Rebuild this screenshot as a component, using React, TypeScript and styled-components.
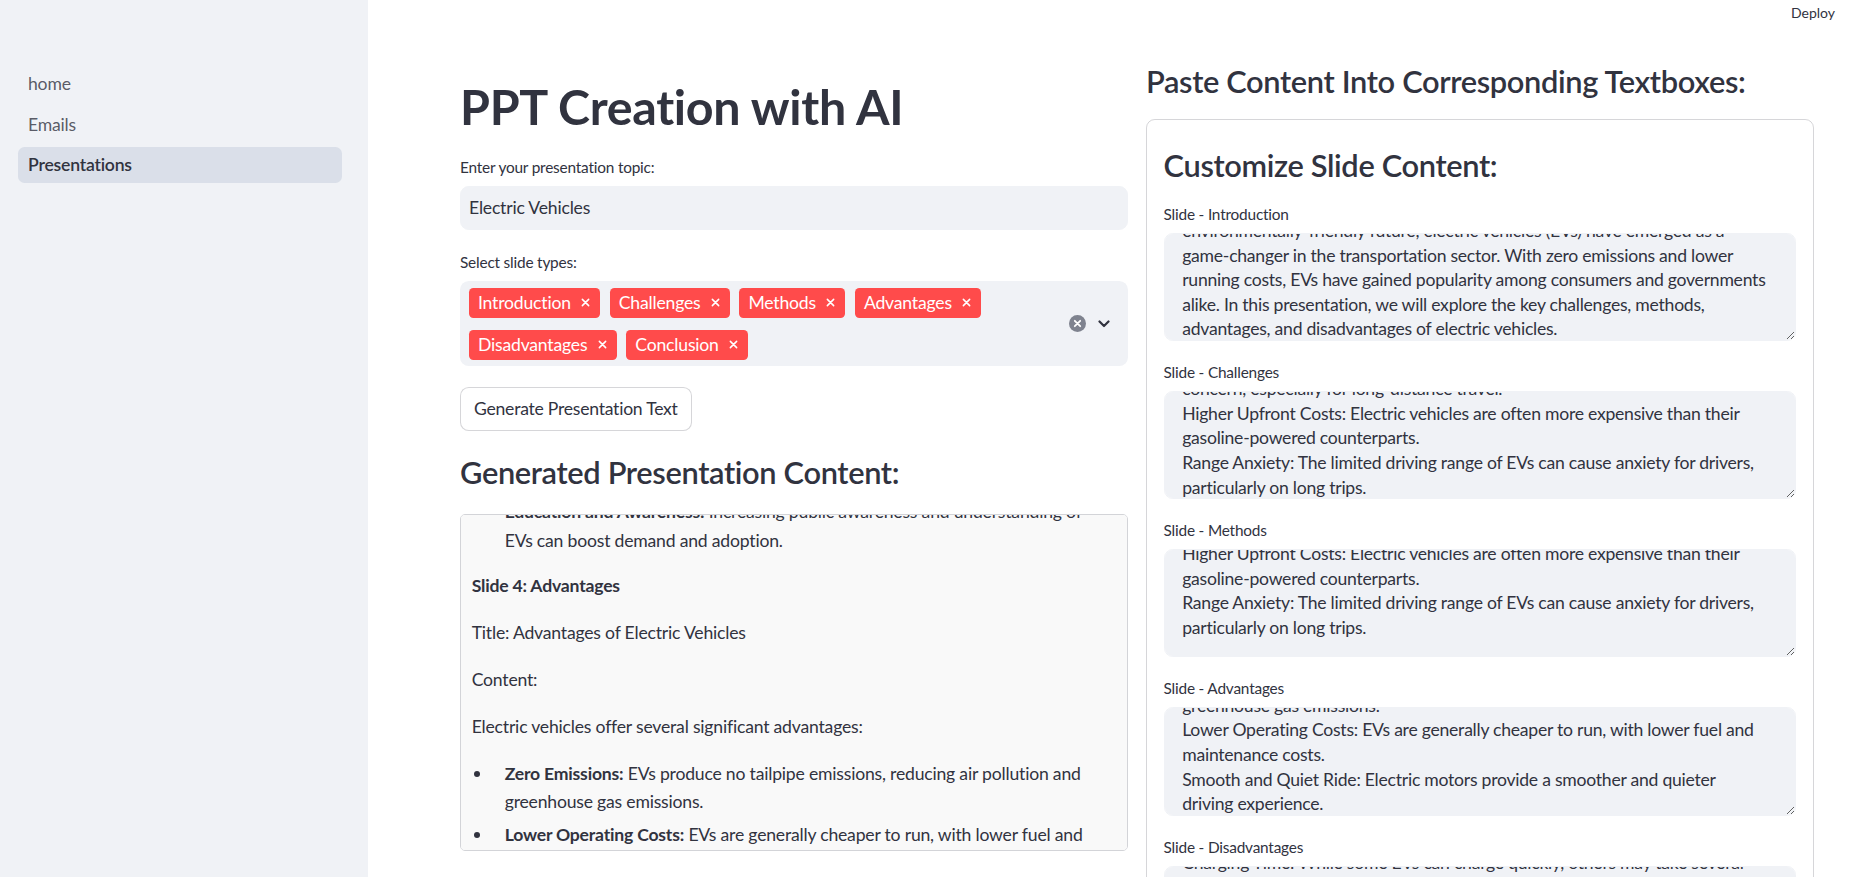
import React, { useLayoutEffect, useRef } from "react";
import styled, { createGlobalStyle } from "styled-components";

const FONT = `"Lato", "Noto Sans", "Liberation Sans", sans-serif`;
const TEXT = "#31333f";

const GlobalStyle = createGlobalStyle`
  html, body { margin: 0; padding: 0; height: 100%; overflow: hidden; background: #ffffff; }
  body { font-family: ${FONT}; color: ${TEXT}; letter-spacing: -0.2px; }
  #root { height: 100%; }
  *, *::before, *::after { box-sizing: border-box; }
`;

const Shell = styled.div`
  display: flex;
  width: 100%;
  height: 100vh;
`;

const Sidebar = styled.aside`
  flex: 0 0 368px;
  background: #f0f2f6;
  padding: 66px 26px 0 18px;
  display: flex;
  flex-direction: column;
  gap: 4.5px;
`;

const NavItem = styled.a<{ $active?: boolean }>`
  display: block;
  height: 36px;
  line-height: 36px;
  padding: 0 10px;
  border-radius: 6.6px;
  font-size: 17.6px;
  text-decoration: none;
  color: ${(p) => (p.$active ? TEXT : "rgba(49, 51, 63, 0.8)")};
  font-weight: ${(p) => (p.$active ? 600 : 400)};
  background: ${(p) => (p.$active ? "rgba(151, 166, 195, 0.25)" : "transparent")};
`;

const Main = styled.main`
  flex: 1;
  min-width: 0;
  height: 100vh;
  overflow: hidden;
  display: flex;
  flex-direction: column;
`;

const Header = styled.header`
  flex: none;
  height: 24px;
  display: flex;
  justify-content: flex-end;
  align-items: center;
  padding: 1px 18px 0 0;
`;

const DeployButton = styled.button`
  border: none;
  background: none;
  padding: 0;
  font-family: ${FONT};
  font-size: 14px;
  letter-spacing: 0;
  line-height: 23px;
  color: ${TEXT};
`;

const Columns = styled.div`
  display: grid;
  grid-template-columns: 1fr 1fr;
  column-gap: 18px;
  align-items: start;
  padding: 38px 39px 0 92px;
`;

const LeftColumn = styled.section`
  display: flex;
  flex-direction: column;
  gap: 21px;
  min-width: 0;
`;

const RightColumn = styled.section`
  display: flex;
  flex-direction: column;
  gap: 17px;
  min-width: 0;
`;

const Title = styled.h1`
  margin: 15px 0 0;
  font-size: 48.4px;
  line-height: 1.2;
  font-weight: 700;
  letter-spacing: -0.3px;
  color: ${TEXT};
`;

const SubHeading = styled.h3<{ $top?: number; $bottom?: number }>`
  margin: ${(p) => p.$top ?? 0}px 0 ${(p) => p.$bottom ?? 0}px;
  font-size: 30.8px;
  line-height: 40px;
  font-weight: 600;
  letter-spacing: -0.35px;
  color: ${TEXT};
`;

const Field = styled.div`
  display: flex;
  flex-direction: column;
`;

const FieldLabel = styled.label`
  font-size: 15.4px;
  line-height: 22px;
  margin-bottom: 8px;
  color: ${TEXT};
`;

const TextInput = styled.input`
  height: 44px;
  background: #f0f2f6;
  border: 1px solid #f0f2f6;
  border-radius: 8.8px;
  padding: 0 8px 1px;
  font-family: ${FONT};
  font-size: 17.6px;
  letter-spacing: -0.2px;
  color: ${TEXT};
  outline: none;
`;

const MultiSelectBox = styled.div`
  display: flex;
  align-items: center;
  background: #f0f2f6;
  border-radius: 8.8px;
  padding: 6.5px 18px 6px 9px;
  min-height: 85px;
`;

const TagList = styled.div`
  flex: 1;
  display: flex;
  flex-wrap: wrap;
  column-gap: 9.5px;
  row-gap: 11.5px;
`;

const Tag = styled.span`
  display: inline-flex;
  align-items: center;
  gap: 10.5px;
  height: 30.5px;
  padding: 0 10px 0 9px;
  background: #ff4b4b;
  color: #ffffff;
  border-radius: 4.4px;
  font-size: 17.6px;
  white-space: nowrap;
`;

const Indicators = styled.div`
  display: flex;
  align-items: center;
  gap: 12.5px;
`;

const ActionButton = styled.button`
  align-self: flex-start;
  height: 43.6px;
  padding: 0 13px;
  border: 1px solid rgba(49, 51, 63, 0.2);
  border-radius: 8.8px;
  background: #ffffff;
  font-family: ${FONT};
  font-size: 17.6px;
  letter-spacing: -0.25px;
  color: ${TEXT};
`;

const GeneratedBox = styled.div`
  position: relative;
  height: 337px;
  overflow-y: auto;
  border: 1px solid #d3d4d8;
  border-radius: 5px;
  background: #f9f9f9;
  padding: 0 18px 0 10.7px;
  font-size: 17.6px;
  line-height: 1.6;
  color: ${TEXT};
  scrollbar-width: none;
  &::-webkit-scrollbar { display: none; }
`;

const Para = styled.p<{ $strong?: boolean }>`
  margin: 0 0 18.8px;
  font-weight: ${(p) => (p.$strong ? 700 : 400)};
`;

const BulletList = styled.ul`
  margin: 0 0 17.6px;
  padding: 0;
  list-style: none;
`;

const BulletItem = styled.li`
  display: grid;
  grid-template-columns: 33px 1fr;
  margin-bottom: 4.5px;
`;

const BulletDot = styled.span`
  width: 6px;
  height: 6px;
  margin: 11px 0 0 2.5px;
  border-radius: 50%;
  background: ${TEXT};
`;

const Card = styled.div`
  border: 1px solid rgba(49, 51, 63, 0.2);
  border-radius: 8.8px;
  padding: 17px 16.6px;
  display: flex;
  flex-direction: column;
  gap: 20px;
`;

const SlideTextArea = styled.textarea`
  height: 108.3px;
  background: #f0f2f6;
  border: 1px solid #f0f2f6;
  border-radius: 8.8px;
  padding: 8.8px 17.6px 17.6px;
  font-family: ${FONT};
  font-size: 17.6px;
  line-height: 1.4;
  letter-spacing: -0.25px;
  color: ${TEXT};
  resize: vertical;
  outline: none;
  scrollbar-width: none;
  &::-webkit-scrollbar { display: none; }
`;

const CloseIcon = ({ size = 9 }: { size?: number }) => (
  <svg width={size} height={size} viewBox="0 0 10 10" aria-hidden>
    <path d="M1.5 1.5 L8.5 8.5 M8.5 1.5 L1.5 8.5" stroke="#ffffff" strokeWidth="1.7" strokeLinecap="round" />
  </svg>
);

const ClearIcon = () => (
  <svg width="17" height="17" viewBox="0 0 17 17" aria-hidden>
    <circle cx="8.5" cy="8.5" r="8.5" fill="#7f838f" />
    <path d="M5.8 5.8 L11.2 11.2 M11.2 5.8 L5.8 11.2" stroke="#ffffff" strokeWidth="1.8" strokeLinecap="round" />
  </svg>
);

const ChevronIcon = () => (
  <svg width="12" height="8" viewBox="0 0 12 8" aria-hidden>
    <path d="M1.5 1.5 L6 6 L10.5 1.5" stroke={TEXT} strokeWidth="2.2" fill="none" strokeLinecap="round" strokeLinejoin="round" />
  </svg>
);

type Block =
  | { kind: "heading"; text: string; anchor?: boolean }
  | { kind: "p"; text: string }
  | { kind: "list"; items: [string, string][] };

const generated: Block[] = [
  { kind: "heading", text: "Slide 1: Introduction" },
  { kind: "p", text: "Title: Introduction to Electric Vehicles" },
  { kind: "p", text: "Content:" },
  {
    kind: "p",
    text:
      "In a world increasingly focused on sustainability and an environmentally-friendly future, electric vehicles (EVs) have emerged as a game-changer in the transportation sector. With zero emissions and lower running costs, EVs have gained popularity among consumers and governments alike. In this presentation, we will explore the key challenges, methods, advantages, and disadvantages of electric vehicles.",
  },
  { kind: "heading", text: "Slide 2: Challenges" },
  { kind: "p", text: "Title: Challenges Facing Electric Vehicles" },
  { kind: "p", text: "Content:" },
  { kind: "p", text: "Despite their benefits, electric vehicles still face several challenges:" },
  {
    kind: "list",
    items: [
      ["Limited Charging Infrastructure:", " The availability of charging stations is still a concern, especially for long-distance travel."],
      ["Higher Upfront Costs:", " Electric vehicles are often more expensive than their gasoline-powered counterparts."],
      ["Range Anxiety:", " The limited driving range of EVs can cause anxiety for drivers, particularly on long trips."],
    ],
  },
  { kind: "heading", text: "Slide 3: Methods" },
  { kind: "p", text: "Title: Methods to Accelerate EV Adoption" },
  { kind: "p", text: "Content:" },
  { kind: "p", text: "Several approaches can help overcome these challenges:" },
  {
    kind: "list",
    items: [
      ["Government Incentives:", " Tax credits and rebates can make EVs more affordable for consumers."],
      ["Charging Network Expansion:", " Investing in public charging infrastructure can reduce range anxiety."],
      ["Education and Awareness:", " Increasing public awareness and understanding of EVs can boost demand and adoption."],
    ],
  },
  { kind: "heading", text: "Slide 4: Advantages", anchor: true },
  { kind: "p", text: "Title: Advantages of Electric Vehicles" },
  { kind: "p", text: "Content:" },
  { kind: "p", text: "Electric vehicles offer several significant advantages:" },
  {
    kind: "list",
    items: [
      ["Zero Emissions:", " EVs produce no tailpipe emissions, reducing air pollution and greenhouse gas emissions."],
      ["Lower Operating Costs:", " EVs are generally cheaper to run, with lower fuel and maintenance costs."],
      ["Smooth and Quiet Ride:", " Electric motors provide a smoother and quieter driving experience."],
    ],
  },
  { kind: "heading", text: "Slide 5: Disadvantages" },
  { kind: "p", text: "Title: Disadvantages of Electric Vehicles" },
  { kind: "p", text: "Content:" },
  {
    kind: "list",
    items: [
      ["Charging Time:", " While some EVs can charge quickly, others may take several hours to fully charge."],
      ["Limited Model Options:", " There are fewer EV models available compared to conventional vehicles."],
      ["Battery Degradation:", " Battery capacity decreases over time."],
    ],
  },
  { kind: "heading", text: "Slide 6: Conclusion" },
  { kind: "p", text: "Title: The Road Ahead for Electric Vehicles" },
  {
    kind: "p",
    text:
      "Electric vehicles represent a promising path toward cleaner and more sustainable transportation. By addressing their challenges, we can accelerate their adoption and enjoy their many benefits.",
  },
];

// Text as laid out in the reference's text boxes (line by line).
const INTRO = [
  "In a world increasingly focused on sustainability and an",
  "environmentally-friendly future, electric vehicles (EVs) have emerged as a",
  "game-changer in the transportation sector. With zero emissions and lower",
  "running costs, EVs have gained popularity among consumers and governments",
  "alike. In this presentation, we will explore the key challenges, methods,",
  "advantages, and disadvantages of electric vehicles.",
].join("\n");

const CHALLENGES = [
  "Limited Charging Infrastructure: The availability of charging stations is still a",
  "concern, especially for long-distance travel.",
  "Higher Upfront Costs: Electric vehicles are often more expensive than their",
  "gasoline-powered counterparts.",
  "Range Anxiety: The limited driving range of EVs can cause anxiety for drivers,",
  "particularly on long trips.",
].join("\n");

const ADVANTAGES = [
  "Zero Emissions: EVs produce no tailpipe emissions, reducing air pollution and",
  "greenhouse gas emissions.",
  "Lower Operating Costs: EVs are generally cheaper to run, with lower fuel and",
  "maintenance costs.",
  "Smooth and Quiet Ride: Electric motors provide a smoother and quieter",
  "driving experience.",
].join("\n");

const DISADVANTAGES = [
  "Charging Time: While some EVs can charge quickly, others may take several",
  "hours to fully charge.",
  "Limited Model Options: There are fewer EV models available compared to",
  "conventional vehicles.",
  "Battery Degradation: Battery capacity decreases over time.",
].join("\n");

const CONCLUSION =
  "Electric vehicles represent a promising path toward cleaner and more sustainable transportation. By addressing their challenges, we can accelerate their adoption and enjoy their many benefits.";

const slideFields = [
  { label: "Slide - Introduction", text: INTRO, gap: 20 },
  { label: "Slide - Challenges", text: CHALLENGES, gap: 20 },
  { label: "Slide - Methods", text: CHALLENGES, gap: 2 },
  { label: "Slide - Advantages", text: ADVANTAGES, gap: 20 },
  { label: "Slide - Disadvantages", text: DISADVANTAGES, gap: 20 },
  { label: "Slide - Conclusion", text: CONCLUSION, gap: 20 },
];

const slideTypes = ["Introduction", "Challenges", "Methods", "Advantages", "Disadvantages", "Conclusion"];

function SlideField({ label, text, gap }: { label: string; text: string; gap: number }) {
  const ref = useRef<HTMLTextAreaElement>(null);
  useLayoutEffect(() => {
    const el = ref.current;
    if (el) el.scrollTop = Math.max(0, el.scrollHeight - el.clientHeight - gap);
  }, [gap]);
  return (
    <Field>
      <FieldLabel>{label}</FieldLabel>
      <SlideTextArea ref={ref} defaultValue={text} />
    </Field>
  );
}

function GeneratedContent() {
  const boxRef = useRef<HTMLDivElement>(null);
  const anchorRef = useRef<HTMLParagraphElement>(null);
  useLayoutEffect(() => {
    const box = boxRef.current;
    const anchor = anchorRef.current;
    if (box && anchor) box.scrollTop = anchor.offsetTop - 58;
  }, []);
  return (
    <GeneratedBox ref={boxRef}>
      {generated.map((b, i) => {
        if (b.kind === "heading")
          return (
            <Para key={i} $strong ref={b.anchor ? anchorRef : undefined}>
              {b.text}
            </Para>
          );
        if (b.kind === "p") return <Para key={i}>{b.text}</Para>;
        return (
          <BulletList key={i}>
            {b.items.map(([strong, rest], j) => (
              <BulletItem key={j}>
                <BulletDot />
                <span>
                  <strong>{strong}</strong>
                  {rest}
                </span>
              </BulletItem>
            ))}
          </BulletList>
        );
      })}
    </GeneratedBox>
  );
}

export default function App() {
  return (
    <>
      <GlobalStyle />
      <Shell>
        <Sidebar>
          <NavItem>home</NavItem>
          <NavItem>Emails</NavItem>
          <NavItem $active>Presentations</NavItem>
        </Sidebar>
        <Main>
          <Header>
            <DeployButton>Deploy</DeployButton>
          </Header>
          <Columns>
            <LeftColumn>
              <Title>PPT Creation with AI</Title>
              <Field>
                <FieldLabel>Enter your presentation topic:</FieldLabel>
                <TextInput defaultValue="Electric Vehicles" />
              </Field>
              <Field>
                <FieldLabel>Select slide types:</FieldLabel>
                <MultiSelectBox>
                  <TagList>
                    {slideTypes.map((t) => (
                      <Tag key={t}>
                        {t}
                        <CloseIcon />
                      </Tag>
                    ))}
                  </TagList>
                  <Indicators>
                    <ClearIcon />
                    <ChevronIcon />
                  </Indicators>
                </MultiSelectBox>
              </Field>
              <ActionButton>Generate Presentation Text</ActionButton>
              <SubHeading $top={1}>Generated Presentation Content:</SubHeading>
              <GeneratedContent />
            </LeftColumn>
            <RightColumn>
              <SubHeading>Paste Content Into Corresponding Textboxes:</SubHeading>
              <Card>
                <SubHeading $top={9} $bottom={-3.5}>
                  Customize Slide Content:
                </SubHeading>
                {slideFields.map((f) => (
                  <SlideField key={f.label} label={f.label} text={f.text} gap={f.gap} />
                ))}
              </Card>
            </RightColumn>
          </Columns>
        </Main>
      </Shell>
    </>
  );
}
